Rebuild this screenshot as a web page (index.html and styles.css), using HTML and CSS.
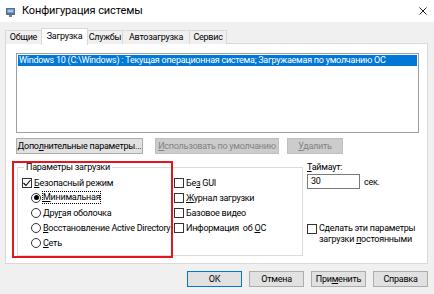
FILE: index.html
```html
<!DOCTYPE html>
<html lang="ru">
<head>
    <meta charset="UTF-8">
    <title>Конфигурация системы</title>
    <link rel="stylesheet" href="styles.css">
</head>
<body>
    <div class="window">
        <div class="titlebar">
            <svg class="app-icon" width="9" height="9" viewBox="0 0 9 9">
                <rect x="0.5" y="0.5" width="8" height="6" fill="#3c78c8" stroke="#6b6b6b"/>
                <rect x="1.5" y="1.5" width="6" height="3" fill="#9cc8f0"/>
                <rect x="3" y="7" width="3" height="2" fill="#7a7a7a"/>
            </svg>
            <span class="title">Конфигурация системы</span>
            <svg class="close" width="8" height="8" viewBox="0 0 8 8">
                <path d="M0.5 0.5 L7.5 7.5 M7.5 0.5 L0.5 7.5" stroke="#222" stroke-width="1"/>
            </svg>
        </div>

        <div class="client">
            <div class="tabs">
                <div class="tab t1">Общие</div>
                <div class="tab t2 active">Загрузка</div>
                <div class="tab t3">Службы</div>
                <div class="tab t4">Автозагрузка</div>
                <div class="tab t5">Сервис</div>
            </div>

            <div class="panel">
                <div class="listbox">
                    <div class="list-item selected">Windows 10 (C:\Windows) : Текущая операционная система; Загружаемая по умолчанию ОС</div>
                </div>

                <div class="btn-row">
                    <div class="btn b-adv">Допо<u>л</u>нительные параметры...</div>
                    <div class="btn disabled b-def"><u>И</u>спользовать по умолчанию</div>
                    <div class="btn disabled b-del"><u>У</u>далить</div>
                </div>

                <div class="options">
                    <fieldset class="group">
                        <legend>Параметры загрузки</legend>
                        <div class="group-cols">
                            <div class="col-left">
                                <div class="row"><span class="check checked"><svg width="8" height="8" viewBox="0 0 8 8"><path d="M0.5 4 L3 6.5 L7.5 1" fill="none" stroke="#000" stroke-width="1.1"/></svg></span><span><u>Б</u>езопасный режим</span></div>
                                <div class="row sub"><span class="radio on"></span><span class="focus"><u>М</u>инимальная</span></div>
                                <div class="row sub"><span class="radio"></span><span>Дру<u>г</u>ая оболочка</span></div>
                                <div class="row sub"><span class="radio"></span><span><u>В</u>осстановление Active Directory</span></div>
                                <div class="row sub"><span class="radio"></span><span><u>С</u>еть</span></div>
                            </div>
                            <div class="col-right">
                                <div class="row"><span class="check"></span><span>Бе<u>з</u> GUI</span></div>
                                <div class="row"><span class="check"></span><span><u>Ж</u>урнал загрузки</span></div>
                                <div class="row"><span class="check"></span><span>Базовое видео</span></div>
                                <div class="row"><span class="check"></span><span>Информация&nbsp; об <u>О</u>С</span></div>
                            </div>
                        </div>
                    </fieldset>

                    <div class="timeout">
                        <div class="timeout-label"><u>Т</u>аймаут:</div>
                        <div class="timeout-line">
                            <div class="textbox">30</div>
                            <span class="sec">сек.</span>
                        </div>
                        <div class="permanent">
                            <span class="check"></span>
                            <span>Сделать эти параметры загрузки <u>п</u>остоянными</span>
                        </div>
                    </div>
                </div>
            </div>

            <div class="dialog-buttons">
                <div class="btn default">ОК</div>
                <div class="btn">Отмена</div>
                <div class="btn">При<u>м</u>енить</div>
                <div class="btn">Справка</div>
            </div>
        </div>

        <!-- red marker drawn over the screenshot -->
        <div class="highlight"></div>
    </div>
</body>
</html>
```

FILE: styles.css
```css
* {
    box-sizing: border-box;
}
body {
    margin: 0;
    font-family: Roboto, "Noto Sans", sans-serif;
    font-size: 9px;
    letter-spacing: -0.25px;
    color: #000;
    background-color: #f0f0f0;
}
u {
    text-decoration-thickness: 1px;
    text-underline-offset: 1px;
}
.window {
    position: relative;
    width: 434px;
    height: 294px;
    background-color: #f0f0f0;
    overflow: hidden;
}

/* title bar */
.titlebar {
    height: 22px;
    background-color: #fff;
    display: flex;
    align-items: center;
    padding-left: 6px;
}
.app-icon {
    margin-top: 2px;
}
.title {
    margin-left: 7px;
    font-size: 11px;
    letter-spacing: -0.1px;
    line-height: 12px;
}
.close {
    margin-left: auto;
    margin-right: 7px;
}

/* tabs */
.client {
    padding: 0 6px 0 5px;
}
.tabs {
    display: flex;
    height: 22px;
    padding-top: 6px;
    position: relative;
    z-index: 1;
}
.tab {
    height: 14px;
    margin-top: 2px;
    border: 1px solid #d9d9d9;
    border-bottom: none;
    background-color: #f0f0f0;
    line-height: 13px;
    text-align: center;
    margin-left: -1px;
}
.tab.t1 { width: 37px; margin-left: 0; }
.tab.t2 { width: 47px; }
.tab.t3 { width: 36px; }
.tab.t4 { width: 68px; }
.tab.t5 { width: 38px; }
.tab.active {
    height: 17px;
    margin-top: 0;
    background-color: #fff;
    line-height: 15px;
}

/* tab page */
.panel {
    height: 221px;
    margin-top: -1px;
    background-color: #fff;
    border: 1px solid #d9d9d9;
    padding: 9px 0 0 10px;
}
.listbox {
    width: 403px;
    height: 80px;
    border: 1px solid #a0a0a0;
    padding: 1px;
}
.list-item {
    height: 11px;
    line-height: 11px;
    padding-left: 1px;
    white-space: nowrap;
    overflow: hidden;
}
.list-item.selected {
    background-color: #0078d7;
    color: #fff;
}

.btn-row {
    display: flex;
    margin-top: 5px;
}
.btn {
    height: 16px;
    line-height: 14px;
    border: 1px solid #adadad;
    background-color: #e1e1e1;
    text-align: center;
    white-space: nowrap;
}
.btn.disabled {
    background-color: #cccccc;
    border-color: #bfbfbf;
    color: #838383;
}
.b-adv { width: 127px; }
.b-def { width: 124px; margin-left: 12px; }
.b-del { width: 56px; margin-left: 8px; }

/* boot options */
.options {
    display: flex;
    margin-top: 7px;
}
.group {
    width: 286px;
    height: 95px;
    margin: 0 0 0 1px;
    min-width: 0;
    border: 1px solid #dcdcdc;
    padding: 2px 0 0 4px;
}
.group legend {
    margin-left: 2px;
    padding: 0 2px;
    line-height: 12px;
}
.group-cols {
    display: flex;
}
.col-left {
    width: 152px;
}
.row {
    display: flex;
    align-items: center;
    height: 15px;
    white-space: nowrap;
}
.row.sub {
    padding-left: 9px;
}
.check {
    width: 10px;
    height: 10px;
    border: 1px solid #333;
    background-color: #fff;
    margin-right: 2px;
    flex-shrink: 0;
    display: flex;
    align-items: center;
    justify-content: center;
}
.radio {
    width: 10px;
    height: 10px;
    border: 1px solid #333;
    border-radius: 50%;
    background-color: #fff;
    margin-right: 2px;
    flex-shrink: 0;
    display: flex;
    align-items: center;
    justify-content: center;
}
.radio.on::after {
    content: "";
    width: 5px;
    height: 5px;
    border-radius: 50%;
    background-color: #000;
}
.focus {
    outline: 1px dotted #000;
    outline-offset: 0;
    line-height: 11px;
}

/* timeout */
.timeout {
    margin-left: 4px;
}
.timeout-label {
    line-height: 12px;
}
.timeout-line {
    display: flex;
    align-items: center;
    margin-top: 1px;
}
.textbox {
    width: 53px;
    height: 15px;
    border: 1px solid #7a7a7a;
    background-color: #fff;
    line-height: 13px;
    padding-left: 3px;
}
.sec {
    margin-left: 4px;
}
.permanent {
    display: flex;
    align-items: flex-start;
    margin-top: 34px;
    line-height: 11px;
    width: 118px;
}
.permanent .check {
    margin-top: 0.5px;
}

/* dialog buttons */
.dialog-buttons {
    display: flex;
    justify-content: flex-end;
    gap: 7px;
    margin-top: 7px;
}
.dialog-buttons .btn {
    width: 55px;
}
.btn.default {
    border-color: #0078d7;
}

.highlight {
    position: absolute;
    left: 12px;
    top: 161px;
    width: 161px;
    height: 97px;
    border: 2px solid #e3161e;
    pointer-events: none;
}
```
